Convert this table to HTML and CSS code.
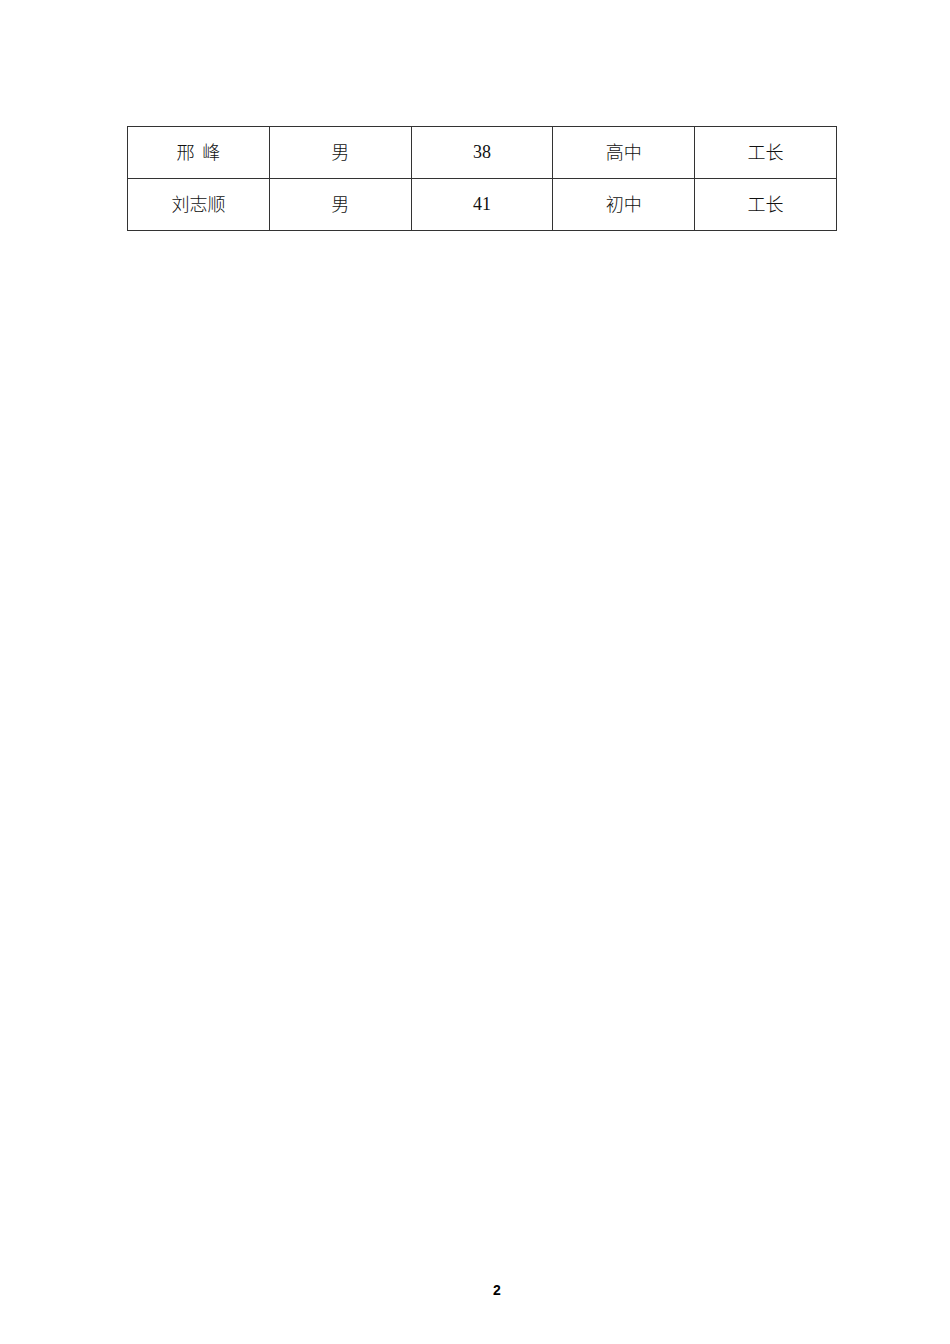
FILE: index.html
```html
<!DOCTYPE html>
<html lang="zh">
<head>
<meta charset="utf-8">
<link rel="stylesheet" href="styles.css">
</head>
<body>
<div class="page">
  <table class="staff">
    <tr>
      <td class="cjk">邢&nbsp;&nbsp;峰</td>
      <td class="cjk">男</td>
      <td class="num">38</td>
      <td class="cjk">高中</td>
      <td class="cjk">工长</td>
    </tr>
    <tr>
      <td class="cjk">刘志顺</td>
      <td class="cjk">男</td>
      <td class="num">41</td>
      <td class="cjk">初中</td>
      <td class="cjk">工长</td>
    </tr>
  </table>
  <div class="footer">2</div>
</div>
</body>
</html>
```

FILE: styles.css
```css
html, body {
  margin: 0;
  padding: 0;
  background: #ffffff;
}
.page {
  width: 950px;
  min-height: 1344px;
  box-sizing: border-box;
  padding-top: 126px;
  display: flex;
  flex-direction: column;
}
.staff {
  margin-left: 127px;
  width: 710px;
  border-collapse: collapse;
  table-layout: fixed;
}
.staff td {
  border: 1px solid #333333;
  height: 48px;
  padding: 0 0 3px 0;
  text-align: center;
  vertical-align: middle;
  color: #111111;
  font-size: 18px;
  line-height: 20px;
}
.staff td.cjk {
  font-family: "Noto Sans CJK SC", "Liberation Serif", serif;
  font-weight: 300;
}
.staff td.num {
  font-family: "Liberation Serif", serif;
  padding-bottom: 1px;
}
.footer {
  margin-top: auto;
  padding-left: 44px;
  padding-bottom: 46px;
  text-align: center;
  font-family: "Liberation Sans", Arial, sans-serif;
  font-weight: bold;
  font-size: 14px;
  line-height: 16px;
  color: #000000;
}
```
